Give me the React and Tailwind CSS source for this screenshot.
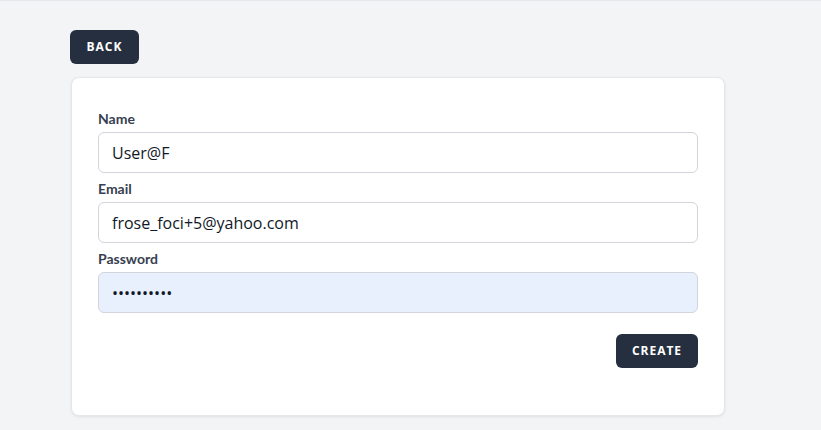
import React, { useState } from 'react';

function App() {
  const [name, setName] = useState('User@F');
  const [email, setEmail] = useState('frose_foci+5@yahoo.com');
  const [password, setPassword] = useState('qwerty1234');

  const labelCls = "block text-[14px] font-bold text-[#374151] mb-[5px] leading-[17px]";
  const inputCls = "w-full h-[41px] px-[13px] rounded-md border border-[#d1d5db] text-[16px] text-[#111827] outline-none";

  return (
    <div className="min-h-[430px] bg-[#f3f4f6] border-t border-[#e5e7eb]" style={{ fontFamily: '"Open Sans", sans-serif' }}>
      <div className="w-[656px] ml-[70px] pt-[29px] pb-4">
        <button className="h-[34px] w-[69px] rounded-md bg-[#252f3f] text-white text-[12px] font-bold tracking-[0.08em]">
          BACK
        </button>
        <div className="mt-[13px] ml-px w-[654px] bg-white rounded-lg border border-[#e5e7eb] shadow-[0_1px_3px_rgba(0,0,0,0.08)] px-[26px] pt-[32px] pb-[47px]">
          <form onSubmit={(e) => e.preventDefault()}>
            <div style={{ fontFamily: 'Lato, sans-serif' }}>
              <label className={labelCls}>Name</label>
            </div>
            <input type="text" value={name} onChange={(e) => setName(e.target.value)} className={inputCls + " bg-white"} />
            <div className="mt-[7px]" style={{ fontFamily: 'Lato, sans-serif' }}>
              <label className={labelCls}>Email</label>
            </div>
            <input type="email" value={email} onChange={(e) => setEmail(e.target.value)} className={inputCls + " bg-white"} />
            <div className="mt-[7px]" style={{ fontFamily: 'Lato, sans-serif' }}>
              <label className={labelCls}>Password</label>
            </div>
            <input type="password" value={password} onChange={(e) => setPassword(e.target.value)} className={inputCls + " bg-[#e8f0fe]"} />
            <div className="flex justify-end mt-[21px]">
              <button type="submit" className="h-[34px] w-[82px] rounded-md bg-[#252f3f] text-white text-[12px] font-bold tracking-[0.08em]">
                CREATE
              </button>
            </div>
          </form>
        </div>
      </div>
    </div>
  );
}

export default App;
